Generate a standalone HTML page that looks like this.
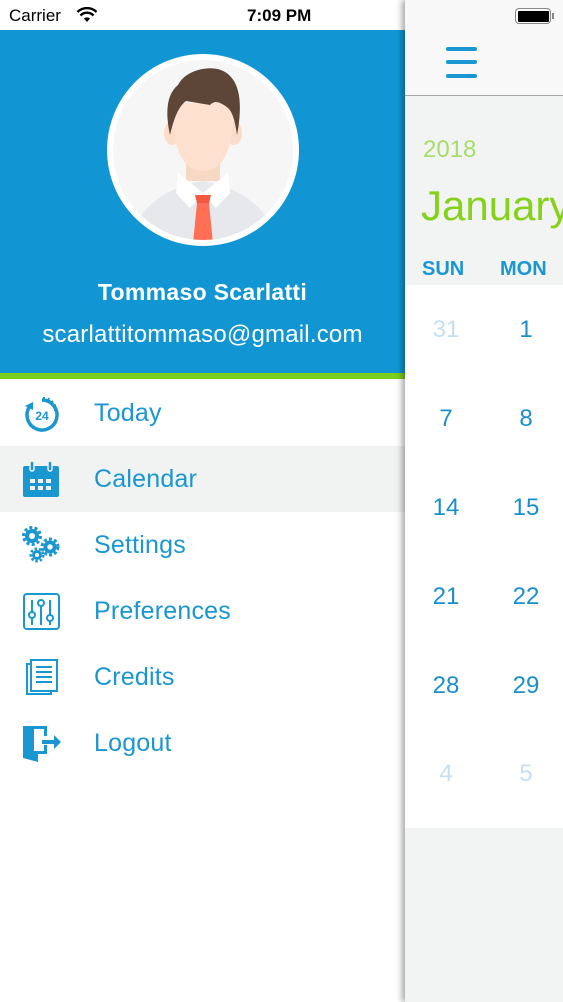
<!DOCTYPE html>
<html><head><style>
*{margin:0;padding:0;box-sizing:border-box}
body{width:563px;height:1002px;overflow:hidden;position:relative;font-family:"Liberation Sans",sans-serif;background:#fff}
.abs{position:absolute}
.menu .item{position:absolute;left:0;width:405px;height:66px}
.menu .item span{position:absolute;left:94px;top:19px;font-size:25px;color:#1a96d1;letter-spacing:0.2px}
.menu svg{position:absolute;left:22px;top:14px}
.num{position:absolute;width:60px;text-align:center;font-size:24px;color:#1a8fcc}
.dim{color:#c5dff0}
</style></head><body>
<div class="abs" style="left:0;top:0;width:405px;height:30px;background:#fff"></div>
<div class="abs" style="left:9px;top:6px;font-size:17px;color:#000">Carrier</div>
<svg class="abs" style="left:76px;top:7px" width="22" height="16" viewBox="0 0 22 16"><path d="M11 15l3-3.5a4.5 4.5 0 0 0-6 0z" fill="#000"/><path d="M4.5 8.5a9 9 0 0 1 13 0M1.5 5a13.5 13.5 0 0 1 19 0" stroke="#000" stroke-width="2.4" fill="none"/></svg>
<div class="abs" style="left:247px;top:6px;font-size:17px;font-weight:bold;color:#000">7:09 PM</div>
<div class="abs" style="left:0;top:30px;width:405px;height:343px;background:#1196d3"></div>
<div class="abs" style="left:0;top:373px;width:405px;height:6px;background:#7ccd1c"></div>
<svg class="abs" style="left:106px;top:53px" width="194" height="194" viewBox="0 0 194 194">
<defs><clipPath id="c"><circle cx="97" cy="97" r="90"/></clipPath></defs>
<circle cx="97" cy="97" r="96" fill="#fff"/>
<circle cx="97" cy="97" r="90" fill="#f6f6f6"/>
<g clip-path="url(#c)">
<path d="M20 200 Q30 140 97 128 Q164 140 174 200z" fill="#e6e8ec"/>
<rect x="80" y="100" width="34" height="28" fill="#f6d8c3"/>
<path d="M72 120 L97 140 L84 155 L70 140z" fill="#fff"/><path d="M122 120 L97 140 L110 155 L124 140z" fill="#fff"/>
<ellipse cx="66" cy="80" rx="8" ry="12" fill="#fbdcc8"/><ellipse cx="128" cy="80" rx="8" ry="12" fill="#fbdcc8"/>
<path d="M66 50 Q66 118 97 118 Q128 118 128 50z" fill="#fde0cd"/>
<path d="M64 82 Q56 45 72 32 Q78 20 96 16 Q118 12 128 28 Q138 45 131 82 Q128 60 122 55 Q110 45 104 52 Q92 50 80 48 Q70 55 64 82z" fill="#5d4537"/>
<path d="M89 142 L105 142 L103 150 L91 150z" fill="#f25740"/>
<path d="M91 150 L103 150 L108 200 L86 200z" fill="#ff6f55"/>
</g></svg>
<div class="abs" style="left:0;width:405px;top:279px;text-align:center;color:#fff;font-size:23px;font-weight:bold;letter-spacing:0.3px">Tommaso Scarlatti</div>
<div class="abs" style="left:0;width:405px;top:321px;text-align:center;color:#fff;font-size:24px;letter-spacing:0.2px">scarlattitommaso@gmail.com</div>
<div class="menu">
<div class="item" style="top:380px"><svg width="40" height="40" viewBox="0 0 40 40"><path d="M8 12 A15 15 0 1 0 20 6" stroke="#1a96d1" stroke-width="3.5" fill="none"/><path d="M3 12 L11 8 L11 16z" fill="#1a96d1"/><g stroke="#1a96d1" stroke-width="2"><path d="M22 3v3M27 4l-1 3M31 7l-2 2M34 11l-3 1M35 16h-3"/></g><text x="20" y="26" font-size="12" font-weight="bold" fill="#1a96d1" text-anchor="middle" font-family="Liberation Sans">24</text></svg><span>Today</span></div>
<div class="item" style="top:446px;background:#f1f2f2"><svg width="40" height="40" viewBox="0 0 40 40"><rect x="1" y="6" width="36" height="31" rx="2" fill="#1a96d1"/><rect x="8" y="1" width="4" height="10" rx="2" fill="#1a96d1" stroke="#f1f2f2" stroke-width="1.5"/><rect x="26" y="1" width="4" height="10" rx="2" fill="#1a96d1" stroke="#f1f2f2" stroke-width="1.5"/><g fill="#f1f2f2"><rect x="8" y="19" width="5" height="4"/><rect x="16" y="19" width="5" height="4"/><rect x="24" y="19" width="5" height="4"/><rect x="8" y="26" width="5" height="4"/><rect x="16" y="26" width="5" height="4"/><rect x="24" y="26" width="5" height="4"/></g></svg><span>Calendar</span></div>
<div class="item" style="top:512px"><svg width="40" height="40" viewBox="0 0 40 40"><g fill="#1a96d1"><circle cx="10" cy="10" r="7"/><circle cx="28" cy="21" r="6.5"/><circle cx="15" cy="29" r="5"/></g><g fill="none" stroke="#1a96d1"><circle cx="10" cy="10" r="8.5" stroke-width="3" stroke-dasharray="3 2.3"/><circle cx="28" cy="21" r="8" stroke-width="3" stroke-dasharray="3 2.2"/><circle cx="15" cy="29" r="6.3" stroke-width="2.5" stroke-dasharray="2.5 2"/></g><g fill="#fff"><circle cx="10" cy="10" r="3"/><circle cx="28" cy="21" r="2.7"/><circle cx="15" cy="29" r="2"/></g></svg><span>Settings</span></div>
<div class="item" style="top:578px"><svg width="40" height="40" viewBox="0 0 40 40"><rect x="2" y="2" width="35" height="35" rx="3" fill="none" stroke="#1a96d1" stroke-width="2"/><g stroke="#1a96d1" stroke-width="2" fill="#fff"><path d="M10 8v25M19 8v25M28 8v25"/><circle cx="10" cy="23" r="3"/><circle cx="19" cy="11" r="3"/><circle cx="28" cy="26" r="3"/></g></svg><span>Preferences</span></div>
<div class="item" style="top:644px"><svg width="40" height="40" viewBox="0 0 40 40"><path d="M8 6H5v30h24v-3" fill="none" stroke="#1a96d1" stroke-width="2"/><rect x="9" y="2" width="26" height="31" fill="#fff" stroke="#1a96d1" stroke-width="2"/><g stroke="#1a96d1" stroke-width="2"><path d="M14 9h16M14 14h16M14 19h16M14 24h16"/></g></svg><span>Credits</span></div>
<div class="item" style="top:710px"><svg width="40" height="40" viewBox="0 0 40 40"><path d="M1 2h24v10h-3V5H12v22h10v-6h3v9H16v8L1 34z" fill="#1a96d1"/><path d="M20 16h12v-5l7 7-7 7v-5H20z" fill="#1a96d1"/></svg><span>Logout</span></div>
</div>
<div class="abs" style="left:405px;top:0;width:158px;height:1002px;background:#f2f3f3;box-shadow:-3px 0 6px rgba(0,0,0,.35)">
<div class="abs" style="left:0;top:0;width:158px;height:96px;background:#f8f8f8;border-bottom:1px solid #a8a8a8"></div>
<div class="abs" style="left:110px;top:8px;width:36px;height:16px;border:1.5px solid #888;border-radius:4px;padding:1.5px"><div style="width:100%;height:100%;background:#000;border-radius:1px"></div></div>
<div class="abs" style="left:147px;top:13px;width:2px;height:6px;background:#888"></div>
<div class="abs" style="left:41px;top:47px;width:31px;height:4px;border-radius:2px;background:#1a96d1"></div>
<div class="abs" style="left:41px;top:60px;width:31px;height:4px;border-radius:2px;background:#1a96d1"></div>
<div class="abs" style="left:41px;top:74px;width:31px;height:4px;border-radius:2px;background:#1a96d1"></div>
<div class="abs" style="left:18px;top:136px;font-size:24px;color:#a8dc6a">2018</div>
<div class="abs" style="left:16px;top:182px;font-size:42px;color:#86d11a;white-space:nowrap">January</div>
<div class="abs" style="left:17px;top:258px;font-size:20px;font-weight:bold;color:#1a96d1">SUN</div>
<div class="abs" style="left:95px;top:258px;font-size:20px;font-weight:bold;color:#1a96d1">MON</div>
<div class="abs" style="left:0;top:285px;width:158px;height:543px;background:#fff"></div>
<div class="num dim" style="left:11px;top:316px">31</div><div class="num" style="left:91px;top:316px">1</div>
<div class="num" style="left:11px;top:405px">7</div><div class="num" style="left:91px;top:405px">8</div>
<div class="num" style="left:11px;top:494px">14</div><div class="num" style="left:91px;top:494px">15</div>
<div class="num" style="left:11px;top:583px">21</div><div class="num" style="left:91px;top:583px">22</div>
<div class="num" style="left:11px;top:672px">28</div><div class="num" style="left:91px;top:672px">29</div>
<div class="num dim" style="left:11px;top:760px">4</div><div class="num dim" style="left:91px;top:760px">5</div>
</div>
</body></html>
